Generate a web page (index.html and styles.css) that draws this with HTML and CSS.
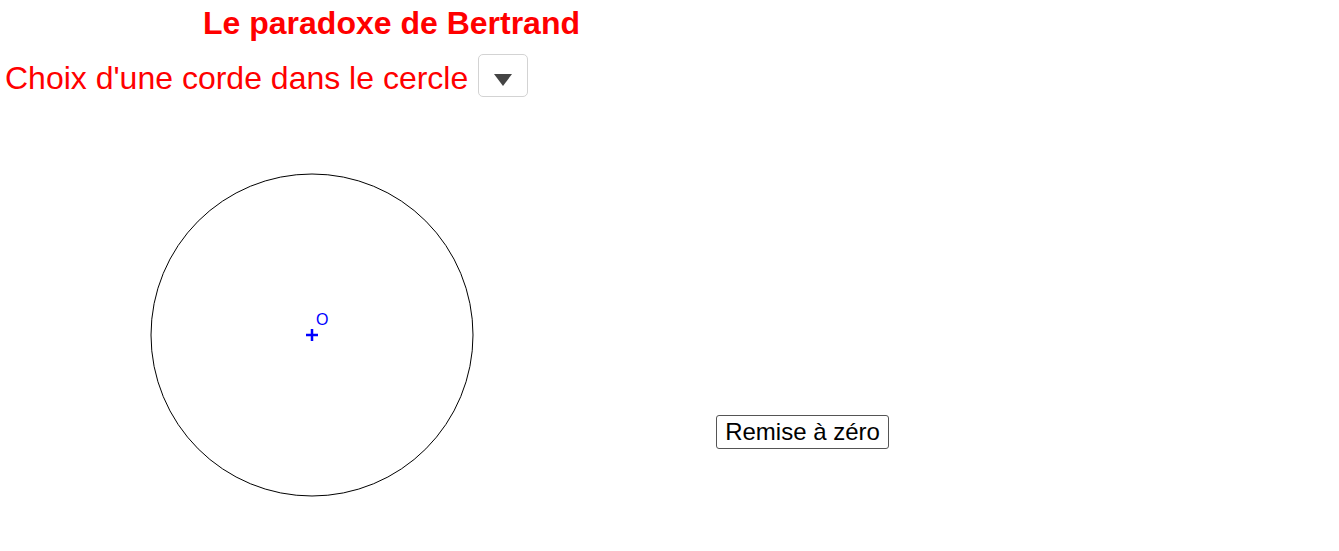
FILE: index.html
```html
<!DOCTYPE html>
<html lang="fr">
<head>
    <meta charset="UTF-8">
    <title>Le paradoxe de Bertrand</title>
    <link rel="stylesheet" href="styles.css">
</head>
<body>

<div class="applet">
    <!-- zone graphique -->
    <svg class="graphique" width="1339" height="551" viewBox="0 0 1339 551">
        <circle cx="312" cy="335" r="161" fill="none" stroke="#000" stroke-width="1"/>
        <path d="M306 335 H318 M312 329 V341" stroke="#0000ff" stroke-width="2.5"/>
        <text x="316" y="325" class="label-point">O</text>
    </svg>

    <div class="entete">
        <h1 class="titre">Le paradoxe de Bertrand</h1>
        <div class="choix">
            <span class="texte-choix">Choix d'une corde dans le cercle</span>
            <button class="liste" type="button">
                <svg width="18" height="12" viewBox="0 0 18 12"><path d="M0 0 H18 L9 12 Z" fill="#444"/></svg>
            </button>
        </div>
    </div>

    <button class="remise" type="button">Remise à zéro</button>
</div>

</body>
</html>
```

FILE: styles.css
```css
body {
    margin: 0;
    font-family: "Liberation Sans", Arial, sans-serif;
    background: white;
}

.applet {
    position: relative;
    width: 1339px;
    height: 551px;
    overflow: hidden;
}

.graphique {
    position: absolute;
    left: 0;
    top: 0;
}

.label-point {
    font-family: "Liberation Sans", Arial, sans-serif;
    font-size: 16px;
    fill: #0000ff;
}

.entete {
    position: relative;
}

.titre {
    margin: 0;
    padding: 4px 0 0 203px;
    font-size: 32px;
    font-weight: bold;
    color: #ff0000;
    line-height: 38px;
}

.choix {
    display: flex;
    align-items: center;
    gap: 10px;
    padding: 12px 0 0 5px;
    color: #ff0000;
    font-size: 32px;
}

.texte-choix {
    padding-top: 6px;
}

.liste {
    width: 50px;
    height: 43px;
    background: white;
    border: 1px solid #d3d3d3;
    border-radius: 5px;
    padding: 8px 0 0 0;
    display: flex;
    align-items: center;
    justify-content: center;
}

.remise {
    position: absolute;
    left: 716px;
    top: 415px;
    width: 173px;
    height: 34px;
    padding: 0;
    background: white;
    border: 1px solid #555;
    border-radius: 3px;
    font-family: "Liberation Sans", Arial, sans-serif;
    font-size: 24px;
    color: black;
}
```
